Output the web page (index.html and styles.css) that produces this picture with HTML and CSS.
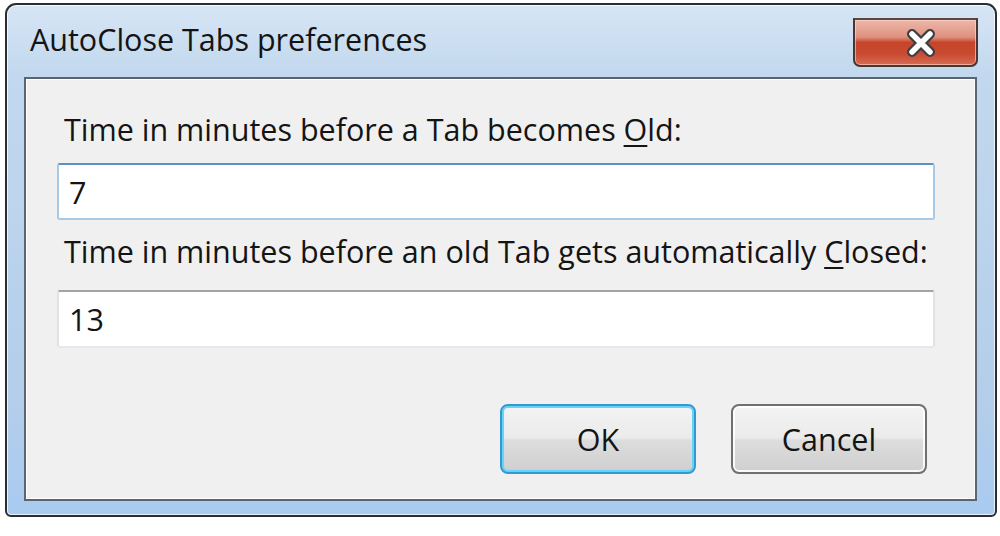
FILE: index.html
```html
<!DOCTYPE html>
<html>
<head>
<meta charset="utf-8">
<link rel="stylesheet" href="styles.css">
</head>
<body>
<div class="window">
  <div class="titlebar">
    <div class="title">AutoClose Tabs preferences</div>
    <div class="close">
      <svg width="36" height="32" viewBox="0 0 36 32">
        <path d="M9 7 L27 25 M27 7 L9 25" stroke="#3b3f44" stroke-width="10" stroke-linecap="round" fill="none"/>
        <path d="M9 7 L27 25 M27 7 L9 25" stroke="#ffffff" stroke-width="5.5" stroke-linecap="round" fill="none"/>
      </svg>
    </div>
  </div>
  <div class="client">
    <div class="label">Time in minutes before a Tab becomes <u>O</u>ld:</div>
    <div class="textbox focused">7</div>
    <div class="label label2">Time in minutes before an old Tab gets automatically <u>C</u>losed:</div>
    <div class="textbox plain">13</div>
    <div class="buttons">
      <div class="btn default">OK</div>
      <div class="btn">Cancel</div>
    </div>
  </div>
</div>
</body>
</html>
```
FILE: styles.css
```css
html, body {
  margin: 0;
  padding: 0;
  background: #ffffff;
}
body {
  width: 1000px;
  height: 536px;
  overflow: hidden;
  font-family: "Open Sans", "Noto Sans", sans-serif;
  color: #141414;
}
.window {
  margin: 3px 3px 0 5px;
  height: 496px;
  border: 2px solid #2a2d31;
  border-radius: 11px 11px 6px 6px;
  background: linear-gradient(to bottom, #d6e5f5 0%, #c2d8ee 14%, #bcd4ec 40%, #b3cdea 80%, #a9cbf1 100%);
  box-shadow: inset 0 0 0 1px rgba(255,255,255,0.75);
  padding: 0 18px 14px 17px;
  display: flex;
  flex-direction: column;
  box-sizing: content-box;
}
.titlebar {
  height: 72px;
  display: flex;
  justify-content: space-between;
  align-items: flex-start;
  flex: none;
}
.title {
  font-size: 30.5px;
  line-height: 40px;
  margin-top: 14px;
  margin-left: 6px;
  color: #141414;
}
.close {
  margin-top: 13px;
  margin-right: -1px;
  width: 121px;
  height: 45px;
  border: 2px solid #4a3530;
  border-top-color: #5a4540;
  border-radius: 0 0 7px 7px;
  background: linear-gradient(to bottom, #ecb7aa 0%, #df917e 38%, #c6442b 50%, #c84a30 75%, #d66c55 100%);
  box-shadow: inset 0 0 0 1px rgba(255,220,210,0.6);
  display: flex;
  align-items: center;
  justify-content: center;
}
.close svg {
  margin-left: 10px;
}
.client {
  flex: 1;
  border: 2px solid #5b6570;
  background: #f0f0f0;
  box-shadow: inset 0 0 0 1px #ffffff;
  padding: 30px 48px 0 31px;
  display: flex;
  flex-direction: column;
}
.label {
  font-size: 30.5px;
  line-height: 40px;
  margin-left: 7px;
  white-space: nowrap;
}
.label u {
  text-decoration-thickness: 2px;
  text-underline-offset: 4px;
}
.label2 {
  margin-top: 11px;
}
.textbox {
  height: 53px;
  margin-top: 14px;
  margin-right: -8px;
  background: #ffffff;
  border: 2px solid #a9c9e8;
  border-top-color: #5d8fc3;
  border-radius: 3px;
  font-size: 30.5px;
  display: flex;
  align-items: center;
  padding-left: 10px;
  box-sizing: content-box;
}
.textbox.plain {
  margin-top: 19px;
  height: 54px;
  border-color: #e2e2e2;
  border-top-color: #a3a3a3;
  border-bottom-color: #e4e9ef;
}
.buttons {
  margin-top: 56px;
  display: flex;
  justify-content: flex-end;
  gap: 35px;
}
.btn {
  width: 192px;
  height: 66px;
  border: 2px solid #707070;
  border-radius: 8px;
  background: linear-gradient(to bottom, #f3f3f3 0%, #ebebeb 48%, #dddddd 52%, #cfcfcf 100%);
  box-shadow: inset 0 0 0 2px rgba(255,255,255,0.85);
  font-size: 30.5px;
  display: flex;
  align-items: center;
  justify-content: center;
  color: #141414;
}
.btn.default {
  border-color: #3398d4;
  box-shadow: inset 0 0 0 2px #63d3f6;
}
```
